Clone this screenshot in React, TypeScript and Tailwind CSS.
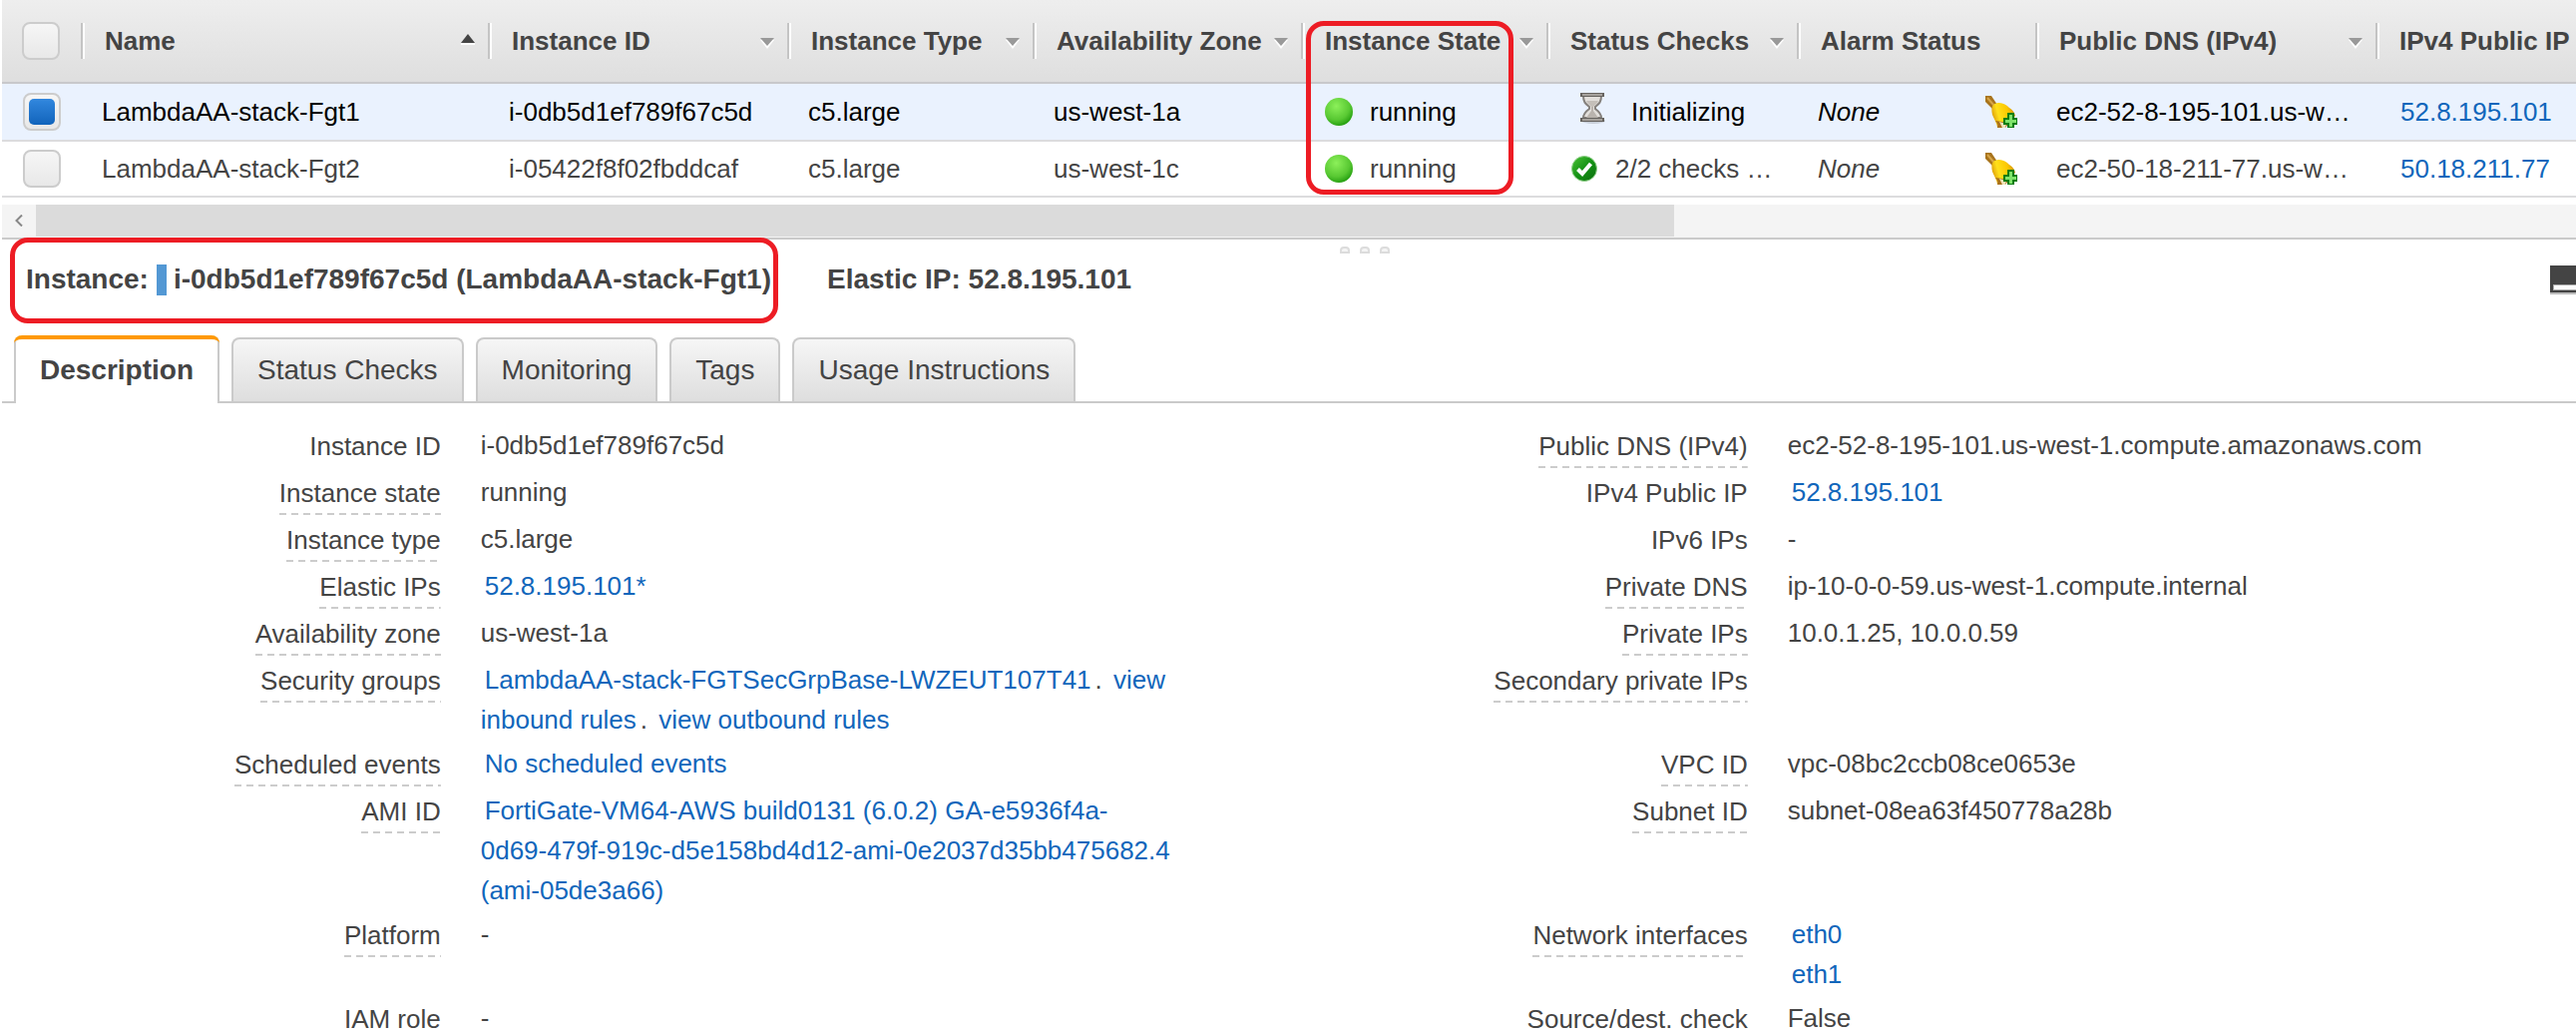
import React from "react";

type SortMark = "asc" | "menu" | "none";

const columns: { label: string; mark: SortMark; width: string }[] = [
  { label: "Name", mark: "asc", width: "w-[408px]" },
  { label: "Instance ID", mark: "menu", width: "w-[300px]" },
  { label: "Instance Type", mark: "menu", width: "w-[246px]" },
  { label: "Availability Zone", mark: "menu", width: "w-[269px]" },
  { label: "Instance State", mark: "menu", width: "w-[246px]" },
  { label: "Status Checks", mark: "menu", width: "w-[251px]" },
  { label: "Alarm Status", mark: "none", width: "w-[239px]" },
  { label: "Public DNS (IPv4)", mark: "menu", width: "w-[341px]" },
  { label: "IPv4 Public IP", mark: "none", width: "w-[300px]" },
];

const instances = [
  {
    name: "LambdaAA-stack-Fgt1",
    id: "i-0db5d1ef789f67c5d",
    type: "c5.large",
    zone: "us-west-1a",
    checks: "Initializing",
    pending: true,
    dns: "ec2-52-8-195-101.us-w…",
    ip: "52.8.195.101",
    selected: true,
  },
  {
    name: "LambdaAA-stack-Fgt2",
    id: "i-05422f8f02fbddcaf",
    type: "c5.large",
    zone: "us-west-1c",
    checks: "2/2 checks …",
    pending: false,
    dns: "ec2-50-18-211-77.us-w…",
    ip: "50.18.211.77",
    selected: false,
  },
];

function SortIcon({ mark }: { mark: SortMark }) {
  if (mark === "none") return null;
  return mark === "asc" ? (
    <svg className="mb-1 h-3 w-4 shrink-0" viewBox="0 0 16 12" aria-hidden="true">
      <path d="M1 10h14v2H1z" fill="#fff" />
      <path d="M8 1l7 9H1z" fill="#444" />
    </svg>
  ) : (
    <svg className="mt-1 h-3 w-4 shrink-0" viewBox="0 0 16 12" aria-hidden="true">
      <path d="M1 3h14l-7 9z" fill="#fff" />
      <path d="M1 1h14l-7 8z" fill="#999" />
    </svg>
  );
}

function RunningIcon() {
  return (
    <svg className="size-7 shrink-0" viewBox="0 0 28 28" aria-hidden="true">
      <defs>
        <radialGradient id="run" cx="0.4" cy="0.3" r="0.75">
          <stop offset="0" stopColor="#8cf05a" />
          <stop offset="0.65" stopColor="#58c832" />
          <stop offset="1" stopColor="#1e9a0c" />
        </radialGradient>
      </defs>
      <circle cx="14" cy="14" r="14" fill="url(#run)" />
    </svg>
  );
}

function HourglassIcon() {
  return (
    <svg className="mb-2 h-8 w-7 shrink-0" viewBox="0 0 28 32" aria-hidden="true">
      <ellipse cx="15" cy="29" rx="12" ry="3" fill="#000" opacity="0.15" />
      <path
        d="M5 4c0 6 2 8 6 11v2c-4 3-6 5-6 9h18c0-4-2-6-6-9v-2c4-3 6-5 6-11z"
        fill="#e2dfdb"
        stroke="#85817d"
        strokeWidth="2"
      />
      <path d="M8 9h12c-1 3-4 4-5 6h-2c-1-2-4-3-5-6z" fill="#c4bfb9" />
      <path d="M13 15h2v4l5 7H8l5-7z" fill="#b9b3ad" />
      <path d="M2 1h24v4H2zM2 26h24v4H2z" fill="#66635f" />
      <path d="M4 2h20v2H4zM4 27h20v2H4z" fill="#a5a19c" />
    </svg>
  );
}

function PassedIcon() {
  return (
    <svg className="size-7 shrink-0" viewBox="0 0 28 28" aria-hidden="true">
      <defs>
        <linearGradient id="ok" x1="0" y1="0" x2="1" y2="1">
          <stop offset="0" stopColor="#4cc437" />
          <stop offset="0.5" stopColor="#159215" />
          <stop offset="1" stopColor="#0a6d0d" />
        </linearGradient>
      </defs>
      <circle cx="14" cy="14" r="12.500" fill="url(#ok)" stroke="#8fcf88" strokeWidth="1" />
      <path d="M7.500 14.500l4.500 4.500 8.500-10" fill="none" stroke="#fff" strokeWidth="4" />
    </svg>
  );
}

function AddAlarmIcon() {
  return (
    <svg className="size-8" viewBox="0 0 32 32" aria-hidden="true">
      <defs>
        <linearGradient id="bell" x1="0" y1="0.6" x2="1" y2="0.3">
          <stop offset="0" stopColor="#d9960a" />
          <stop offset="0.3" stopColor="#ffe01a" />
          <stop offset="0.7" stopColor="#fcc800" />
          <stop offset="1" stopColor="#c98a10" />
        </linearGradient>
      </defs>
      <path d="M0 0h6l6 9-5 4L0 6z" fill="#a8741c" />
      <path d="M2 2l7 8" stroke="#d6a548" strokeWidth="2" />
      <path
        d="M8 9c6-4 12-1 16 3 3 2 5 4 6 8L19 32h-7c0-4-3-8-5-13-1-4-1-8 1-10z"
        fill="url(#bell)"
      />
      <path d="M10 25c2 2 3 4 2 7h8l4-5z" fill="#a8701c" />
      <path d="M14 26l3 6h3l1-4z" fill="#f0e3b8" />
      <path d="M22 17h7v5h3v7h-3v3h-7v-3h-4v-7h4z" fill="#0b7d12" />
      <path d="M24 19h3v5h4v3h-4v4h-3v-4h-4v-3h4z" fill="#7fe36a" />
    </svg>
  );
}

function RowCheckbox({ label, checked = false }: { label: string; checked?: boolean }) {
  return (
    <input
      type="checkbox"
      aria-label={label}
      defaultChecked={checked}
      className="block size-[38px] appearance-none rounded-lg border-2 border-[#ccc] bg-linear-to-b from-[#f6f6f6] to-[#e8e8e8] p-1 before:block before:size-full before:rounded-[5px] checked:before:bg-linear-to-b checked:before:from-[#3187de] checked:before:to-[#1164bb]"
    />
  );
}

function InstanceTable() {
  return (
    <div className="ml-[2px] overflow-hidden">
      <table className="w-[2679px] table-fixed border-separate border-spacing-0 text-[26px] leading-[30px] whitespace-nowrap">
        <thead>
          <tr className="h-[84px] bg-linear-to-b from-[#eee] to-[#dedede]">
            <th className="w-[79px] border-b-2 border-[#c8c8cb] pl-5">
              <RowCheckbox label="Select all instances" />
            </th>
            {columns.map((column) => (
              <th
                key={column.label}
                scope="col"
                className={`relative border-b-2 border-[#c8c8cb] p-0 text-left ${column.width}`}
              >
                <div className="flex items-center">
                  <span className="mr-5 h-9 w-1 shrink-0 border-r-2 border-l-2 border-r-white border-l-[#c4c4c4]" />
                  <button type="button" className="flex flex-1 items-center justify-between pr-3 font-bold">
                    {column.label}
                    <SortIcon mark={column.mark} />
                  </button>
                </div>
                {column.label === "Instance State" && (
                  <div className="pointer-events-none absolute top-[21px] left-[5px] z-10 h-[174px] w-[208px] rounded-[18px] border-5 border-[#ed1c24]" />
                )}
              </th>
            ))}
          </tr>
        </thead>
        <tbody>
          {instances.map((row) => (
            <tr
              key={row.id}
              className={
                row.selected
                  ? "h-[58px] bg-[#eaf2fe] text-black *:border-b-2 *:border-[#dcdcde]"
                  : "h-[56px] *:border-b-2 *:border-[#dcdcde]"
              }
            >
              <td className="py-0 pl-[21px]">
                <RowCheckbox label={`Select ${row.name}`} checked={row.selected} />
              </td>
              <td className="pl-[21px]">{row.name}</td>
              <td className="pl-[21px]">{row.id}</td>
              <td className="pl-[21px]">{row.type}</td>
              <td className="pl-[21px]">{row.zone}</td>
              <td className="pl-6">
                <div className="flex items-center gap-[17px]">
                  <RunningIcon />
                  running
                </div>
              </td>
              <td className={row.pending ? "pl-8" : "pl-6"}>
                <div className={row.pending ? "flex items-center gap-[25px]" : "flex items-center gap-[17px]"}>
                  {row.pending ? <HourglassIcon /> : <PassedIcon />}
                  {row.checks}
                </div>
              </td>
              <td className="pr-[18px] pl-[21px]">
                <div className="flex items-center justify-between">
                  <em>None</em>
                  <button type="button" aria-label={`Add alarm for ${row.name}`}>
                    <AddAlarmIcon />
                  </button>
                </div>
              </td>
              <td className="pl-[21px]">{row.dns}</td>
              <td className="pl-[25px]">
                <a href="#ip" className="text-[#1166bb]">
                  {row.ip}
                </a>
              </td>
            </tr>
          ))}
        </tbody>
      </table>
      <div className="mt-[7px] flex h-[35px] border-b-2 border-[#cacaca] bg-[#f4f4f4] pb-px">
        <button type="button" aria-label="Scroll left" className="flex w-[34px] shrink-0 items-center justify-center">
          <svg className="h-3 w-2" viewBox="0 0 8 12" aria-hidden="true">
            <path d="M7 0.500L1.500 6 7 11.500" fill="none" stroke="#888" strokeWidth="2" />
          </svg>
        </button>
        <div className="flex-1">
          <div className="h-full w-[64.500%] bg-[#dbdbdb]" />
        </div>
      </div>
    </div>
  );
}

function Link({ children }: { children: React.ReactNode }) {
  return (
    <a href="#details" className="px-1 text-[#1166bb]">
      {children}
    </a>
  );
}

type Field = { label: string; plain?: boolean; value: React.ReactNode };

const details: [Field, Field][] = [
  [
    { label: "Instance ID", plain: true, value: "i-0db5d1ef789f67c5d" },
    { label: "Public DNS (IPv4)", value: "ec2-52-8-195-101.us-west-1.compute.amazonaws.com" },
  ],
  [
    { label: "Instance state", value: "running" },
    { label: "IPv4 Public IP", plain: true, value: <Link>52.8.195.101</Link> },
  ],
  [
    { label: "Instance type", value: "c5.large" },
    { label: "IPv6 IPs", plain: true, value: "-" },
  ],
  [
    { label: "Elastic IPs", value: <Link>52.8.195.101*</Link> },
    { label: "Private DNS", value: "ip-10-0-0-59.us-west-1.compute.internal" },
  ],
  [
    { label: "Availability zone", value: "us-west-1a" },
    { label: "Private IPs", value: "10.0.1.25, 10.0.0.59" },
  ],
  [
    {
      label: "Security groups",
      value: (
        <>
          <Link>LambdaAA-stack-FGTSecGrpBase-LWZEUT107T41</Link>.{" "}
          <Link>
            view
            <br />
            inbound rules
          </Link>
          . <Link>view outbound rules</Link>
        </>
      ),
    },
    { label: "Secondary private IPs", value: "" },
  ],
  [
    { label: "Scheduled events", value: <Link>No scheduled events</Link> },
    { label: "VPC ID", value: "vpc-08bc2ccb08ce0653e" },
  ],
  [
    {
      label: "AMI ID",
      value: (
        <Link>
          FortiGate-VM64-AWS build0131 (6.0.2) GA-e5936f4a-
          <br />
          0d69-479f-919c-d5e158bd4d12-ami-0e2037d35bb475682.4
          <br />
          (ami-05de3a66)
        </Link>
      ),
    },
    { label: "Subnet ID", value: "subnet-08ea63f450778a28b" },
  ],
  [
    { label: "Platform", value: "-" },
    {
      label: "Network interfaces",
      value: (
        <>
          <Link>eth0</Link>
          <br />
          <Link>eth1</Link>
        </>
      ),
    },
  ],
  [
    { label: "IAM role", value: "-" },
    { label: "Source/dest. check", value: "False" },
  ],
];

function DetailField({ field }: { field: Field }) {
  return (
    <div className="grid min-h-[47px] grid-cols-[34%_1fr] items-start gap-x-10 leading-10">
      <dt className="text-right">
        <span
          className={
            field.plain
              ? "inline-block pt-px align-top"
              : "inline-block bg-[repeating-linear-gradient(to_right,#ccc_0_7px,transparent_7px_12px)] bg-[length:100%_2px] bg-bottom bg-no-repeat pt-px pb-[2px] align-top"
          }
        >
          {field.label}
        </span>
      </dt>
      <dd className="pb-1">{field.value}</dd>
    </div>
  );
}

const tabs = ["Description", "Status Checks", "Monitoring", "Tags", "Usage Instructions"];

function InstancePanel() {
  return (
    <section className="relative">
      <div className="absolute top-[7px] left-[52%] flex gap-[10px]" aria-hidden="true">
        {[0, 1, 2].map((dot) => (
          <span key={dot} className="h-[7px] w-[10px] rounded-t-[4px] border-2 border-[#dcdcdc] bg-[#f4f4f4]" />
        ))}
      </div>
      <header className="flex h-[78px] items-center pt-[2px] pl-[26px] text-[28px] leading-8 font-bold">
        <h2 className="relative flex items-center">
          Instance:
          <span className="mr-[7px] ml-2 h-[31px] w-[10px] bg-[#5398d4]" />
          i-0db5d1ef789f67c5d (LambdaAA-stack-Fgt1)
          <span className="pointer-events-none absolute -top-[26px] -right-[7px] -bottom-[28px] -left-4 rounded-[18px] border-5 border-[#ed1c24]" />
        </h2>
        <p className="ml-14">Elastic IP: 52.8.195.101</p>
        <button type="button" aria-label="Minimize panel" className="ml-auto">
          <svg className="h-[29px] w-[26px]" viewBox="0 0 26 29" aria-hidden="true">
            <path d="M0 0h26v27H0z" fill="#444" />
            <path d="M0 27h26v2H0z" fill="#bbb" />
            <rect x="3.500" y="19.500" width="26" height="5" fill="#fff" stroke="#aaa" />
          </svg>
        </button>
      </header>
      <div role="tablist" className="ml-[2px] flex items-end gap-3 border-b-2 border-[#cacaca] pt-[18px] pl-3 text-[28px] leading-[62px]">
        {tabs.map((tab, index) => (
          <button
            key={tab}
            type="button"
            role="tab"
            aria-selected={index === 0}
            className={
              index === 0
                ? "relative -mb-[2px] rounded-t-lg border-x-2 border-[#cacaca] bg-white px-6 pt-1 pb-[2px] font-bold before:absolute before:-inset-x-[2px] before:top-0 before:h-2 before:rounded-t-lg before:border-t-4 before:border-[#ff9900]"
                : "rounded-t-lg border-x-2 border-t-2 border-[#cacaca] bg-linear-to-b from-[#f6f6f6] to-[#dedede] px-6"
            }
          >
            {tab}
          </button>
        ))}
      </div>
      <dl className="pt-[22px] pl-[14px] text-[26px]">
        {details.map(([left, right]) => (
          <div key={left.label} className="grid grid-cols-2 gap-x-[52px]">
            <DetailField field={left} />
            <DetailField field={right} />
          </div>
        ))}
      </dl>
    </section>
  );
}

export default function App() {
  return (
    <main className="h-screen overflow-hidden bg-white font-['Liberation_Sans',Arial,sans-serif] text-[#444]">
      <InstanceTable />
      <InstancePanel />
    </main>
  );
}
